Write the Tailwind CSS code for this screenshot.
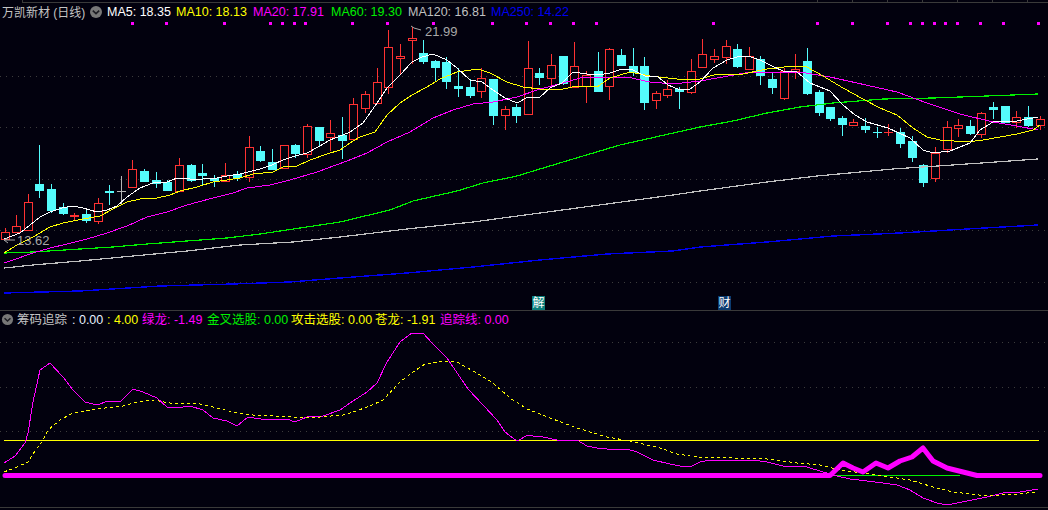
<!DOCTYPE html>
<html lang="zh">

<head>
    <meta charset="UTF-8" />
    <title>万凯新材 (日线)</title>
    <script src="https://cdn.jsdelivr.net/npm/@tailwindcss/browser@4"></script>
</head>

<body class="bg-[#02010e] w-[1048px] h-[510px] overflow-hidden font-['Liberation_Sans','Noto_Sans_CJK_SC',sans-serif] text-[12.5px] leading-none">

    <!-- Top ruler -->
    <svg id="ruler" class="block" width="1048" height="3"></svg>

    <!-- K-line panel -->
    <section class="relative h-[307px]">
        <div class="h-[17px] flex items-center pl-[2px] whitespace-nowrap">
            <span class="text-[#c4c4c4] text-[12px] w-[87px] pt-[2px]">万凯新材 (日线)</span>
            <svg class="mr-[4px]" width="14" height="14" viewBox="0 0 14 14">
                <circle cx="7" cy="7" r="6" fill="#777777" />
                <polyline points="3.8,5.6 7,8.6 10.2,5.6" fill="none" stroke="#1c1c22" stroke-width="1.6" />
            </svg>
            <div class="flex pt-[2px]">
                <span class="text-white w-[69px]">MA5: 18.35</span>
                <span class="text-[#ffff00] w-[77px]">MA10: 18.13</span>
                <span class="text-[#ff00ff] w-[78px]">MA20: 17.91</span>
                <span class="text-[#00f000] w-[77px]">MA60: 19.30</span>
                <span class="text-[#c0c0c0] w-[83px]">MA120: 16.81</span>
                <span class="text-[#0000f0]">MA250: 14.22</span>
            </div>
        </div>
        <svg id="kline" class="block" width="1048" height="290" viewBox="0 20 1048 290"></svg>
        <span class="absolute left-[532px] bottom-0 w-[13px] h-[14px] bg-[#0b7f7c] text-white text-[12px] flex items-center justify-center">解</span>
        <span class="absolute left-[718px] bottom-0 w-[13px] h-[14px] bg-[#0b3b70] text-white text-[12px] flex items-center justify-center">财</span>
    </section>

    <!-- Indicator panel -->
    <section class="border-y border-[#3a3a3a]">
        <div class="h-[17px] flex items-center pl-[1px] whitespace-nowrap">
            <svg class="mr-[3px]" width="13" height="13" viewBox="0 0 14 14">
                <circle cx="7" cy="7" r="6" fill="#777777" />
                <polyline points="3.8,5.6 7,8.6 10.2,5.6" fill="none" stroke="#1c1c22" stroke-width="1.6" />
            </svg>
            <span class="text-[#c4c4c4] w-[55px] pt-[1px]">筹码追踪</span>
            <span class="text-[#e8f0ff] w-[35px] pt-[1px]">: 0.00</span>
            <span class="text-[#ffff00] w-[35px] pt-[1px]">: 4.00</span>
            <span class="text-[#ff00ff] w-[65px] pt-[1px]">绿龙: -1.49</span>
            <span class="text-[#00f000] w-[84px] pt-[1px]">金叉选股: 0.00</span>
            <span class="text-[#ffff00] w-[84px] pt-[1px]">攻击选股: 0.00</span>
            <span class="text-[#ffff00] w-[65px] pt-[1px]">苍龙: -1.91</span>
            <span class="text-[#ff00ff] pt-[1px]">追踪线: 0.00</span>
        </div>
        <svg id="indicator" class="block" width="1048" height="179" viewBox="0 328 1048 179"></svg>
    </section>

    <script>
        const red = "#ff3232", cyan = "#54fcfc";

        // type, high, body top, body bottom, low (pixel rows of the screenshot)
        const candles = [
            ["r",228,232,239,239],["r",215,226,232,232],["r",194,202,230,230],["c",145,184,190,197],["c",184,189,210,212],
            ["c",203,207,213,214],["r",213,215,216,220],["c",210,214,220,222],["r",198,203,221,223],["c",185,191,192,204],
            ["g",176,191,191,203],["r",160,169,187,187],["c",169,171,181,181],["c",172,180,183,187],["c",180,182,190,190],
            ["r",158,165,191,191],["c",164,165,180,181],["c",164,173,175,184],["c",175,178,180,186],["r",163,175,181,181],
            ["c",171,174,177,180],["r",136,147,177,181],["c",146,151,160,161],["c",149,162,169,169],["r",145,145,168,168],
            ["c",144,145,153,157],["r",124,126,154,157],["c",127,127,140,145],["r",120,133,137,150],["c",117,135,140,158],
            ["r",98,104,139,139],["r",91,94,108,112],["r",68,82,103,103],["r",30,47,87,93],["r",44,56,58,74],
            ["r",27,38,40,63],["c",40,53,61,63],["c",60,61,67,80],["c",57,62,81,88],["c",68,86,88,96],
            ["c",79,87,95,97],["r",68,78,91,97],["c",79,79,115,124],["r",106,109,115,129],["c",104,107,115,122],
            ["r",41,68,114,114],["c",68,73,77,84],["r",54,65,78,87],["c",56,56,83,84],["r",42,66,87,87],
            ["r",71,75,86,102],["c",52,71,91,91],["r",48,49,86,99],["c",49,55,65,65],["c",48,66,72,75],
            ["c",57,66,102,109],["r",91,93,100,108],["r",80,89,95,97],["c",87,89,91,108],["r",59,71,92,93],
            ["r",39,54,67,67],["r",49,56,59,62],["r",40,46,57,63],["c",44,49,66,67],["r",47,56,69,69],
            ["c",56,59,75,84],["c",73,79,87,93],["r",68,71,98,99],["r",54,69,71,78],["c",48,61,93,94],
            ["c",90,92,112,115],["c",107,107,118,120],["c",116,118,124,135],["r",119,122,125,125],["c",118,126,129,132],
            ["c",127,132,132,137],["r",124,132,132,135],["c",128,132,143,147],["c",136,141,157,161],["c",164,165,182,186],
            ["r",147,153,178,181],["r",121,127,149,152],["r",119,125,128,136],["c",120,126,133,134],["r",112,113,134,137],
            ["c",102,107,109,118],["c",106,106,122,122],["r",111,117,122,127],["c",106,117,125,126],["r",116,119,125,129]
        ];

        const ma5 = "4,239 20,233 30,225 40,217 50,212 62,208 73,206 83,208 97,212 107,210 117,206 127,197 140,188 153,183 167,182 177,178 190,179 203,179 217,178 227,176 240,174 248,172 260,169 272,165 283,160 295,156 307,153 318,147 330,140 343,135 350,132 363,123 377,103 387,88 400,75 412,62 422,57 433,54 447,60 457,68 470,80 482,82 493,90 505,98 517,103 528,97 540,97 550,88 562,83 573,72 587,74 598,75 610,73 622,69 633,70 645,76 657,76 668,85 680,90 690,89 700,82 713,68 727,60 737,57 748,56 760,60 772,66 783,71 797,72 810,83 830,91 843,105 855,115 867,122 888,128 910,138 923,150 933,153 950,151 970,143 980,130 993,122 1017,121 1038,117";
        const ma10 = "4,253 17,245 33,237 50,227 63,223 83,219 100,216 113,209 127,202 140,199 157,198 170,195 180,191 197,187 213,182 227,180 240,178 253,174 273,172 283,167 297,166 310,160 327,154 340,150 350,143 360,137 375,132 387,115 400,103 412,95 427,87 440,79 457,72 478,69 490,73 507,82 523,87 540,89 563,89 577,86 597,87 610,78 630,72 650,76 677,79 700,79 717,74 743,74 767,69 793,66 807,67 823,76 843,88 863,99 880,108 897,115 913,128 927,137 940,140 967,142 983,140 1000,137 1017,134 1033,130 1040,125";
        const ma20 = "4,263 13,260 33,253 50,248 67,244 87,239 107,233 127,226 147,217 167,212 187,205 213,198 233,193 247,188 270,185 290,180 317,172 347,161 367,153 387,142 410,132 433,118 453,110 473,104 493,102 517,97 540,89 563,83 580,78 600,77 627,77 650,82 673,84 700,81 723,77 750,72 800,72 830,77 857,83 897,92 927,103 960,114 993,122 1017,126 1038,130";
        const ma60 = "4,253 33,252 80,249 113,247 147,244 187,241 227,238 260,234 300,228 340,222 390,210 413,201 457,191 483,183 517,176 530,172 573,159 620,145 660,136 700,127 733,121 767,113 800,107 833,103 883,99 933,98 987,96 1038,94";
        const ma120 = "4,268 33,265 80,261 133,256 187,251 240,245 293,242 340,237 407,229 473,222 540,213 607,204 673,195 700,191 767,182 817,176 893,169 967,164 1038,159";
        const ma250 = "4,293 80,291 160,286 233,284 290,282 340,278 407,273 473,267 540,260 607,254 673,251 700,247 767,242 833,236 900,233 967,229 1038,225";

        const trackThin = "4,463 15,456 25,443 28,433 33,402 40,370 50,363 63,377 73,390 85,402 97,405 108,401 121,401 133,389 143,392 157,398 167,407 183,407 190,406 203,410 213,418 227,421 237,426 248,417 267,420 287,419 295,422 307,417 323,416 340,410 350,403 367,392 377,383 387,362 400,342 412,333 423,333 432,343 447,358 468,389 483,405 497,420 505,432 517,441 528,435 533,436 543,437 557,440 577,440 587,446 597,448 607,449 627,449 637,452 653,460 670,464 680,466 692,466 700,462 710,460 753,460 767,462 783,466 807,467 823,472 837,476 850,479 867,481 883,483 897,485 910,490 923,498 937,503 947,505 967,501 987,497 1003,493 1020,492 1038,489";
        const trackDash = "4,472 17,467 28,462 37,448 42,442 48,430 60,420 73,413 90,410 113,407 123,406 133,403 153,400 170,403 200,404 217,408 233,412 253,415 293,417 320,417 343,415 353,412 370,406 383,400 400,382 413,372 425,364 443,361 457,362 473,371 493,383 510,398 527,409 550,418 577,428 607,437 630,441 660,448 677,454 697,457 733,458 767,459 797,463 820,465 840,470 877,475 910,480 933,487 953,492 987,496 1017,494 1038,492";
        const trackThick = "5,475.5 830,475.5 843,463 853,468 863,472 876,463 888,468 900,461 912,457 923,448 933,461 947,468 967,473 977,475.5 1040,475.5";

        const dots = [132,166,224,270,282,294,305,352,387,433,492,526,550,573,596,713,817,852,887,910,922,934,945,957,980,1003,1038];

        const grid = y => `<line x1="0" x2="1048" y1="${y}.5" y2="${y}.5" stroke="#3c3c3c" stroke-dasharray="1 5" />`;
        const line = (pts, color, extra = "") =>
            `<polyline points="${pts}" fill="none" stroke="${color}" shape-rendering="crispEdges" ${extra} />`;

        // Candles
        function drawCandle(c, i) {
            const [type, high, bodyTop, bodyBottom, low] = c;
            const x = Math.round(4.5 + 11.63 * i);
            const color = type === "r" ? red : type === "c" ? cyan : "#b4b4b4";
            const wick = (a, b) => `<rect x="${x}" y="${a}" width="1" height="${b - a + 1}" fill="${color}" />`;
            // Crosses have a flat one pixel body
            if (bodyTop === bodyBottom) {
                return wick(high, low) + `<rect x="${x - 4}" y="${bodyTop}" width="9" height="1" fill="${color}" />`;
            }
            let s = "";
            if (high < bodyTop) s += wick(high, bodyTop);
            if (low > bodyBottom) s += wick(bodyBottom, low);
            if (type === "r") {
                s += `<rect x="${x - 4}.5" y="${bodyTop}.5" width="8" height="${bodyBottom - bodyTop}" fill="#02010e" stroke="${color}" stroke-width="1" />`;
            } else {
                s += `<rect x="${x - 4}" y="${bodyTop}" width="9" height="${bodyBottom - bodyTop + 1}" fill="${color}" />`;
            }
            return s;
        }

        let klineHtml = [76, 127, 179, 230, 282].map(grid).join("");
        klineHtml += dots.map(x => `<rect x="${x - 1}" y="22" width="3" height="3" fill="#ff00ff" />`).join("");
        klineHtml += candles.map(drawCandle).join("");
        klineHtml += line(ma250, "#0000f0", 'stroke-width="1.4"') + line(ma120, "#c0c0c0", 'stroke-width="1.2"') + line(ma60, "#00f000", 'stroke-width="1.2"');
        klineHtml += line(ma20, "#ff00ff") + line(ma10, "#ffff00") + line(ma5, "#ffffff");
        klineHtml += `<polyline points="411,26 414,28 421,30" fill="none" stroke="#a8a8a8" />
            <text x="425" y="36" fill="#a8a8a8" font-family="'Liberation Sans', sans-serif" font-size="13">21.99</text>
            <polyline points="8,238 4,240 8,243" fill="none" stroke="#a8a8a8" />
            <line x1="4" x2="15" y1="240" y2="240" stroke="#a8a8a8" />
            <text x="17" y="245" fill="#a8a8a8" font-family="'Liberation Sans', sans-serif" font-size="13">13.62</text>`;
        document.getElementById("kline").innerHTML = klineHtml;

        let lowHtml = [342, 387, 431].map(grid).join("");
        lowHtml += `<line x1="4" x2="1039" y1="440.5" y2="440.5" stroke="#ffff00" />`;
        lowHtml += `<line x1="837" x2="960" y1="475.5" y2="475.5" stroke="#00f000" />`;
        lowHtml += line(trackThin, "#ff00ff");
        lowHtml += line(trackDash, "#ffff00", 'stroke-dasharray="3 3"');
        lowHtml += `<polyline points="${trackThick}" fill="none" stroke="#ff00ff" stroke-width="5" stroke-linejoin="round" stroke-linecap="round" />`;
        document.getElementById("indicator").innerHTML = lowHtml;

        let rulerHtml = `<rect x="22" y="2" width="1026" height="1" fill="#3a3a3a" /><rect x="22" y="0" width="1" height="3" fill="#3a3a3a" />`;
        [817, 852, 887, 922, 957, 992, 1027].forEach(x => {
            rulerHtml += `<rect x="${x}" y="0" width="1" height="3" fill="#3a3a3a" />`;
        });
        document.getElementById("ruler").innerHTML = rulerHtml;
    </script>

</body>

</html>
